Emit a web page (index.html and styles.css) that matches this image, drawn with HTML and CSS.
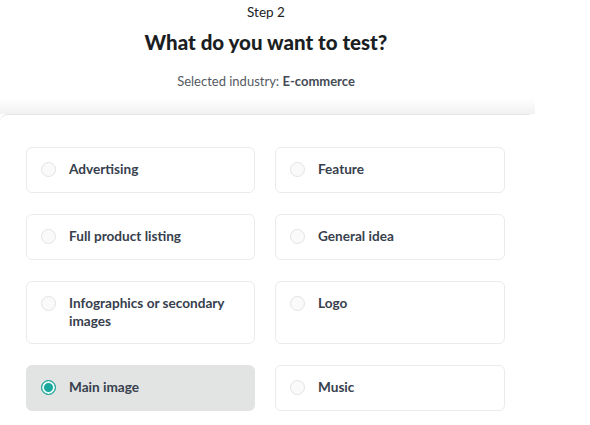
FILE: index.html
```html
<!DOCTYPE html>
<html>
<head>
<meta charset="utf-8">
<link rel="stylesheet" href="styles.css">
</head>
<body>
<div class="page">
  <header class="head">
    <div class="step">Step 2</div>
    <h1 class="title">What do you want to test?</h1>
    <div class="industry">Selected industry: <b>E-commerce</b></div>
  </header>
  <div class="shade"></div>
  <main class="panel">
    <div class="grid">
      <label class="card"><span class="radio"></span><span class="label">Advertising</span></label>
      <label class="card"><span class="radio"></span><span class="label">Feature</span></label>
      <label class="card"><span class="radio"></span><span class="label">Full product listing</span></label>
      <label class="card"><span class="radio"></span><span class="label">General idea</span></label>
      <label class="card tall"><span class="radio"></span><span class="label">Infographics or secondary images</span></label>
      <label class="card tall"><span class="radio"></span><span class="label">Logo</span></label>
      <label class="card selected"><span class="radio"></span><span class="label">Main image</span></label>
      <label class="card"><span class="radio"></span><span class="label">Music</span></label>
    </div>
  </main>
</div>
</body>
</html>
```

FILE: styles.css
```css
* { box-sizing: border-box; }
html, body { margin: 0; padding: 0; background: #fff; }
body {
  font-family: Lato, "Noto Sans", "Liberation Sans", sans-serif;
  color: #2e3542;
  width: 590px;
  height: 425px;
  overflow: hidden;
}
.page { position: relative; }
.head {
  width: 532px;
  text-align: center;
  padding-top: 4px;
  height: 98px;
}
.step {
  font-size: 13.5px;
  line-height: 16px;
  color: #222;
}
.title {
  margin: 10px 0 0;
  font-size: 20.5px;
  line-height: 24px;
  font-weight: 900;
  color: #1b1e23;
}
.industry {
  margin-top: 19px;
  font-size: 13px;
  line-height: 16px;
  color: #555a62;
}
.industry b { color: #454b55; font-weight: 700; }
.shade {
  height: 16px;
  width: 535px;
  background: linear-gradient(#ffffff, #f1f1f1);
}
.panel {
  width: 530px;
  border-top: 1px solid #e6e6e6;
  border-top-left-radius: 8px;
  background: #fff;
  padding: 32px 25px 0 26px;
}
.grid {
  display: grid;
  grid-template-columns: 229px 230px;
  column-gap: 20px;
  row-gap: 21px;
}
.card {
  display: flex;
  align-items: flex-start;
  gap: 13px;
  min-height: 46px;
  padding: 12px 12px 12px 14px;
  border: 1px solid #ebebeb;
  border-radius: 6px;
  background: #fff;
}
.card.tall { min-height: 63px; }
.radio {
  flex: none;
  width: 15px;
  height: 15px;
  margin-top: 2px;
  border-radius: 50%;
  border: 1px solid #e3e3e3;
  background: #fafafa;
}
.label {
  font-size: 13.6px;
  line-height: 18px;
  font-weight: 700;
  color: #37404d;
}
.card.selected {
  background: #e1e4e3;
  border-color: #e1e4e3;
}
.card.selected .radio {
  border: 1.5px solid #1a9e95;
  background: #1aa79d;
  box-shadow: inset 0 0 0 2px #e6faf8;
}
```
